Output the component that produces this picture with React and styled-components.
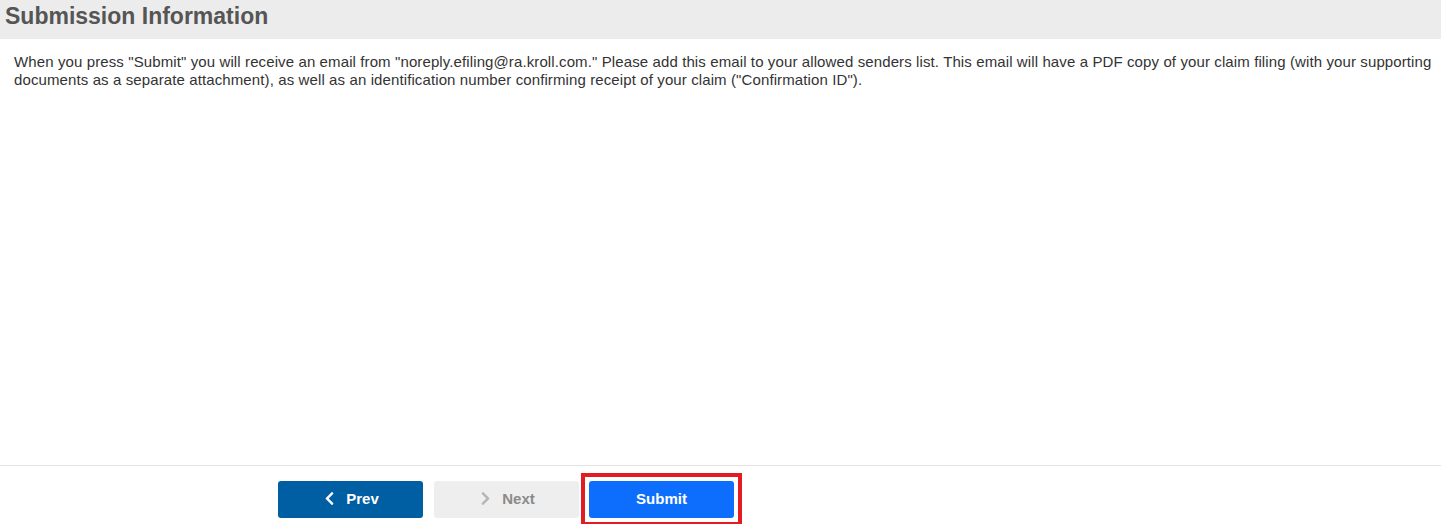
import React from 'react';
import styled, { createGlobalStyle } from 'styled-components';
import { FaChevronLeft, FaChevronRight } from 'react-icons/fa';

const GlobalStyle = createGlobalStyle`
  html, body {
    margin: 0;
    padding: 0;
    background: #fff;
    font-family: "Liberation Sans", Arial, sans-serif;
  }
`;

const Styles = {
  Page: styled.div`
    display: flex;
    flex-direction: column;
    height: 100vh;
    overflow: hidden;
  `,
  Header: styled.div`
    background-color: #ececec;
    height: 39px;
    display: flex;
    align-items: center;
    padding-left: 5px;
    box-sizing: border-box;
  `,
  Title: styled.h2`
    margin: 0;
    color: #555;
    font-size: 23px;
    font-weight: 700;
    line-height: 1;
    margin-top: -7px;
  `,
  Content: styled.div`
    flex: 1;
    padding: 14px 4px 0 14px;
  `,
  Text: styled.p`
    margin: 0;
    color: #333;
    font-size: 15px;
    letter-spacing: 0.11px;
    line-height: 18px;
  `,
  Footer: styled.div`
    border-top: 1px solid #e3e3e3;
    height: 59px;
    box-sizing: border-box;
    padding: 15px 0 0 278px;
    display: flex;
    align-items: flex-start;
  `,
  Button: styled.button`
    display: flex;
    align-items: center;
    justify-content: center;
    gap: 9px;
    width: 145px;
    height: 37px;
    padding: 0 0 2px;
    border: none;
    border-radius: 3px;
    font-family: inherit;
    font-size: 15px;
    font-weight: 700;
    cursor: pointer;
    margin-right: ${props => props.$gap || 0}px;
    background-color: ${props => props.$bg};
    color: ${props => props.$color};
    svg {
      color: ${props => props.$icon || props.$color};
    }
  `,
  Highlight: styled.div`
    outline: 4px solid #e31b23;
    outline-offset: 4px;
    display: flex;
  `
};

const App = () => (
  <Styles.Page>
    <GlobalStyle />
    <Styles.Header>
      <Styles.Title>Submission Information</Styles.Title>
    </Styles.Header>
    <Styles.Content>
      <Styles.Text>
        When you press "Submit" you will receive an email from "noreply.efiling@ra.kroll.com." Please add this email to your allowed senders list. This email will have a PDF copy of your claim filing (with your supporting documents as a separate attachment), as well as an identification number confirming receipt of your claim ("Confirmation ID").
      </Styles.Text>
    </Styles.Content>
    <Styles.Footer>
      <Styles.Button $bg="#005ea2" $color="#fff" $gap={11}>
        <FaChevronLeft size={15} /> Prev
      </Styles.Button>
      <Styles.Button $bg="#eeeeee" $color="#8a8a8a" $icon="#b5b5b5" $gap={10}>
        <FaChevronRight size={15} /> Next
      </Styles.Button>
      <Styles.Highlight>
        <Styles.Button $bg="#0d6efd" $color="#fff">Submit</Styles.Button>
      </Styles.Highlight>
    </Styles.Footer>
  </Styles.Page>
);

export default App;
